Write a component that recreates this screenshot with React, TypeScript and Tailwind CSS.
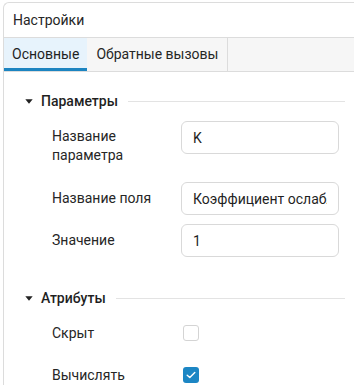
import React from "react";

function Caret() {
  return (
    <svg width="8" height="5" viewBox="0 0 8 5" className="shrink-0">
      <path d="M0.3 0.3 L7.7 0.3 L4 4.8 Z" fill="#222" />
    </svg>
  );
}

function SectionHeader({ title }: { title: string }) {
  return (
    <div className="flex items-center h-[20px] pl-[21px] pr-[10px]">
      <Caret />
      <span className="ml-[8px] text-[14px] font-medium text-[#1f1f1f] leading-[20px]">{title}</span>
      <div className="flex-1 ml-[10px] h-px bg-[#e3e3e3]" />
    </div>
  );
}

function InputRow({ label, value, labelClass }: { label: React.ReactNode; value: string; labelClass?: string }) {
  return (
    <div className="flex items-start pl-[48px]">
      <div className={"w-[129px] shrink-0 text-[14px] leading-[19px] text-[#262626] " + (labelClass ?? "pt-[7px]")}>{label}</div>
      <input
        readOnly
        value={value}
        className="w-[158px] h-[33px] border border-[#d9d9d9] rounded-[6px] px-[11px] text-[14px] text-[#1f1f1f] outline-none bg-white"
        style={{ fontFamily: "Roboto, sans-serif" }}
      />
    </div>
  );
}

function CheckRow({ label, checked }: { label: string; checked: boolean }) {
  return (
    <div className="flex items-center pl-[48px] h-[16px]">
      <div className="w-[131px] shrink-0 text-[14px] leading-[19px] text-[#262626]">{label}</div>
      {checked ? (
        <div className="w-[16px] h-[16px] rounded-[3px] bg-[#1c86c4] flex items-center justify-center">
          <svg width="10" height="8" viewBox="0 0 10 8">
            <path d="M1.2 4.2 L3.8 6.6 L8.8 1.4" stroke="white" strokeWidth="1.4" fill="none" strokeLinecap="round" strokeLinejoin="round" />
          </svg>
        </div>
      ) : (
        <div className="w-[16px] h-[16px] rounded-[3px] border border-[#d4d4d4] bg-white" />
      )}
    </div>
  );
}

export default function App() {
  return (
    <div className="w-[354px] h-[385px] overflow-hidden bg-white" style={{ fontFamily: "Roboto, sans-serif" }}>
      <div className="mt-[2px] ml-[3px] w-[400px] h-[420px] border-t border-l border-[#dcdcdc] rounded-tl-[6px]">
        <div className="h-[35px] flex items-center pl-[9px] border-b border-[#dcdcdc] text-[14px] text-[#262626]">
          Настройки
        </div>
        <div className="h-[34px] flex bg-[#f6f6f6] border-b border-[#dcdcdc]">
          <div className="relative px-[8px] flex items-center bg-[#e7f3fc] text-[14px] text-[#1f1f1f]">
            Основные
            <div className="absolute left-0 right-0 bottom-0 h-[3px] bg-[#1b84c1]" />
          </div>
          <div className="px-[9px] flex items-center border-r border-[#dcdcdc] text-[14px] text-[#262626]">
            Обратные вызовы
          </div>
        </div>
        <div className="w-[351px]">
          <div className="pt-[19px]">
            <SectionHeader title="Параметры" />
          </div>
          <div className="mt-[10px]">
            <InputRow label={<>Название<br />параметра</>} value="K" labelClass="pt-[6px]" />
          </div>
          <div className="mt-[17px]">
            <InputRow label="Название поля" value="Коэффициент ослабления" />
          </div>
          <div className="mt-[9px]">
            <InputRow label="Значение" value="1" />
          </div>
          <div className="mt-[31px]">
            <SectionHeader title="Атрибуты" />
          </div>
          <div className="mt-[17px]">
            <CheckRow label="Скрыт" checked={false} />
          </div>
          <div className="mt-[26px]">
            <CheckRow label="Вычислять" checked={true} />
          </div>
        </div>
      </div>
    </div>
  );
}
